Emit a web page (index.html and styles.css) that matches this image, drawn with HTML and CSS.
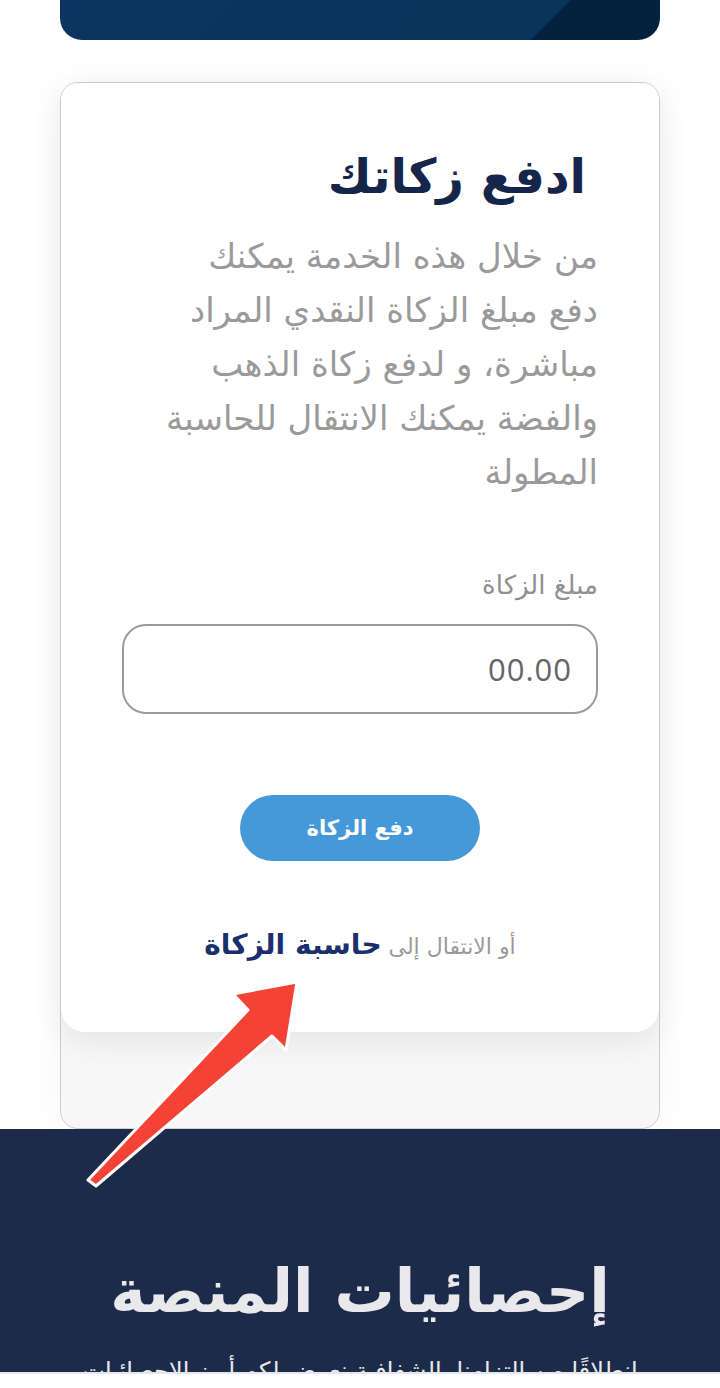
FILE: index.html
```html
<!DOCTYPE html>
<html lang="ar" dir="rtl">
<head>
  <meta charset="UTF-8">
  <title>ادفع زكاتك</title>
  <link rel="stylesheet" href="styles.css">
</head>
<body>

  <div class="banner"></div>

  <div class="zakat-wrap">
    <div class="zakat-card">
      <h2 class="zakat-title">ادفع زكاتك</h2>
      <p class="zakat-desc">من خلال هذه الخدمة يمكنك دفع مبلغ الزكاة النقدي المراد مباشرة، و لدفع زكاة الذهب والفضة يمكنك الانتقال للحاسبة المطولة</p>

      <label class="zakat-label" for="amount">مبلغ الزكاة</label>
      <input class="zakat-input" id="amount" type="text" placeholder="00.00">

      <div class="btn-row">
        <button class="pay-btn" type="button">دفع الزكاة</button>
      </div>

      <p class="calc-link">أو الانتقال إلى <a href="#">حاسبة الزكاة</a></p>
    </div>
  </div>

  <section class="stats">
    <h2>إحصائيات المنصة</h2>
    <p>انطلاقًا من التزامنا بالشفافية نعرض لكم أبرز الإحصائيات</p>
  </section>
  <div class="bottom-strip"></div>

  <!-- annotation arrow -->
  <svg class="arrow" width="720" height="1388" viewBox="0 0 720 1388">
    <path d="M88 1180 L248 1010 L233 994 L297 982 L286 1050 L272 1036 L96 1186 Z" fill="#f44336" stroke="#fff" stroke-width="3" stroke-linejoin="round"/>
  </svg>

</body>
</html>
```

FILE: styles.css
```css
body {
  margin: 0;
  background: #fff;
  font-family: "DejaVu Sans", "Noto Sans", sans-serif;
  position: relative;
}

.banner {
  width: 600px;
  height: 40px;
  margin: 0 auto;
  border-radius: 0 0 22px 22px;
  background: linear-gradient(135deg, #0b3560 0%, #08335a 79.7%, #02223f 79.7%);
}

.zakat-wrap {
  width: 600px;
  box-sizing: border-box;
  margin: 42px auto 0;
  border: 1.5px solid #cfcfcf;
  border-radius: 18px;
  padding-bottom: 96px;
  background: linear-gradient(#fdfdfd, #f7f7f7);
  box-shadow: 0 0 40px rgba(0,0,0,0.04);
}

.zakat-card {
  background: #fff;
  border-radius: 17px 17px 24px 24px;
  padding: 62px 61px 65px;
  box-shadow: 0 12px 30px rgba(0,0,0,0.07);
}

.zakat-title {
  margin: 0 12px 22px 0;
  font-size: 48px;
  line-height: 62px;
  font-weight: bold;
  color: #16264a;
}

.zakat-desc {
  max-width: 442px;
  margin: 0 0 69px;
  font-size: 34px;
  line-height: 54px;
  color: #9a9a9a;
}

.zakat-label {
  display: block;
  font-size: 26px;
  line-height: 34px;
  color: #909090;
  margin-bottom: 22px;
}

.zakat-input {
  display: block;
  width: 100%;
  height: 90px;
  box-sizing: border-box;
  border: 2px solid #9b9b9b;
  border-radius: 24px;
  padding: 0 24px;
  font-family: "Open Sans", sans-serif;
  font-size: 31px;
  letter-spacing: 1px;
  direction: rtl;
}

.zakat-input::placeholder {
  color: #666;
}

.btn-row {
  display: flex;
  justify-content: center;
  margin-top: 81px;
}

.pay-btn {
  width: 240px;
  height: 66px;
  border: none;
  border-radius: 33px;
  background: #4599d8;
  color: #fff;
  font-family: inherit;
  font-size: 21px;
  font-weight: bold;
}

.calc-link {
  margin: 64px 0 0;
  text-align: center;
  font-size: 22px;
  line-height: 40px;
  color: #9a9a9a;
}

.calc-link a {
  color: #1b2f6e;
  font-weight: bold;
  font-size: 28px;
  text-decoration: none;
}

.stats {
  height: 243px;
  overflow: hidden;
  background: #1d2b4b;
  text-align: center;
  color: #e9e9ec;
  box-sizing: border-box;
  padding-top: 117px;
}

.stats h2 {
  margin: 0;
  font-size: 60px;
  line-height: 90px;
  font-weight: bold;
}

.stats p {
  margin: 20px 0 0;
  font-size: 24px;
  line-height: 30px;
  color: #e9e9ec;
  white-space: nowrap;
}

.bottom-strip {
  height: 17px;
  border-top: 2px solid #e3e6ec;
  background: #fff;
}

.arrow {
  position: absolute;
  left: 0;
  top: 0;
  pointer-events: none;
}
```
